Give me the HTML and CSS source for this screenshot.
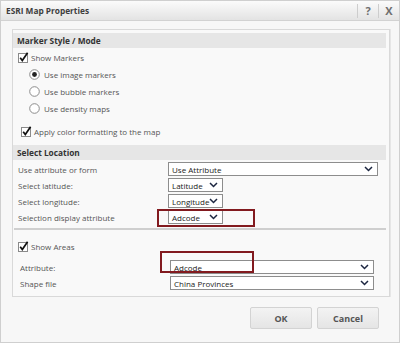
FILE: index.html
```html
<!DOCTYPE html>
<html lang="en">
<head>
  <meta charset="UTF-8">
  <title>ESRI Map Properties</title>
  <link rel="stylesheet" href="styles.css">
</head>
<body>
  <div class="dialog">
    <div class="titlebar">
      <span class="title">ESRI Map Properties</span>
      <div class="tools">
        <span class="tool-sep"></span>
        <span class="tool">?</span>
        <span class="tool-sep"></span>
        <span class="tool">X</span>
      </div>
    </div>

    <div class="panel">
      <div class="section-head">Marker Style / Mode</div>
      <label class="opt">
        <svg class="check" width="11" height="11" viewBox="0 0 11 11"><rect x="0.5" y="1.5" width="9" height="9" fill="#fff" stroke="#8a8a8a"/><path d="M2.2 5.8 L4.3 8.6 L9.6 0.8" fill="none" stroke="#111" stroke-width="1.7"/></svg>
        Show Markers
      </label>
      <label class="opt radio-row">
        <svg class="radio" width="11" height="11" viewBox="0 0 11 11"><circle cx="5.5" cy="5.5" r="4.8" fill="#fff" stroke="#8c8c8c"/><circle cx="5.5" cy="5.5" r="2.4" fill="#222"/></svg>
        Use image markers
      </label>
      <label class="opt radio-row">
        <svg class="radio" width="11" height="11" viewBox="0 0 11 11"><circle cx="5.5" cy="5.5" r="4.8" fill="#fff" stroke="#8c8c8c"/></svg>
        Use bubble markers
      </label>
      <label class="opt radio-row">
        <svg class="radio" width="11" height="11" viewBox="0 0 11 11"><circle cx="5.5" cy="5.5" r="4.8" fill="#fff" stroke="#8c8c8c"/></svg>
        Use density maps
      </label>
      <label class="opt apply-row">
        <svg class="check" width="11" height="11" viewBox="0 0 11 11"><rect x="0.5" y="1.5" width="9" height="9" fill="#fff" stroke="#8a8a8a"/><path d="M2.2 5.8 L4.3 8.6 L9.6 0.8" fill="none" stroke="#111" stroke-width="1.7"/></svg>
        Apply color formatting to the map
      </label>

      <div class="section-head location-head">Select Location</div>
      <div class="field-row">
        <span class="field-label">Use attribute or form</span>
        <div class="select wide">Use Attribute<svg class="chev" width="9" height="6" viewBox="0 0 9 6"><path d="M1 1 L4.5 4.5 L8 1" fill="none" stroke="#1c2640" stroke-width="1.5"/></svg></div>
      </div>
      <div class="field-row">
        <span class="field-label">Select latitude:</span>
        <div class="select small">Latitude<svg class="chev" width="9" height="6" viewBox="0 0 9 6"><path d="M1 1 L4.5 4.5 L8 1" fill="none" stroke="#1c2640" stroke-width="1.5"/></svg></div>
      </div>
      <div class="field-row">
        <span class="field-label">Select longitude:</span>
        <div class="select small">Longitude<svg class="chev" width="9" height="6" viewBox="0 0 9 6"><path d="M1 1 L4.5 4.5 L8 1" fill="none" stroke="#1c2640" stroke-width="1.5"/></svg></div>
      </div>
      <div class="field-row">
        <span class="field-label">Selection display attribute</span>
        <div class="field-cell">
          <div class="select small">Adcode<svg class="chev" width="9" height="6" viewBox="0 0 9 6"><path d="M1 1 L4.5 4.5 L8 1" fill="none" stroke="#1c2640" stroke-width="1.5"/></svg></div>
          <span class="mark mark-one"></span>
        </div>
      </div>

      <div class="divider"></div>

      <label class="opt">
        <svg class="check" width="11" height="11" viewBox="0 0 11 11"><rect x="0.5" y="1.5" width="9" height="9" fill="#fff" stroke="#8a8a8a"/><path d="M2.2 5.8 L4.3 8.6 L9.6 0.8" fill="none" stroke="#111" stroke-width="1.7"/></svg>
        Show Areas
      </label>
      <div class="field-row area-row">
        <span class="field-label">Attribute:</span>
        <div class="field-cell">
          <div class="select area">Adcode<svg class="chev" width="9" height="6" viewBox="0 0 9 6"><path d="M1 1 L4.5 4.5 L8 1" fill="none" stroke="#1c2640" stroke-width="1.5"/></svg></div>
          <span class="mark mark-two"></span>
        </div>
      </div>
      <div class="field-row area-row">
        <span class="field-label">Shape file</span>
        <div class="select area">China Provinces<svg class="chev" width="9" height="6" viewBox="0 0 9 6"><path d="M1 1 L4.5 4.5 L8 1" fill="none" stroke="#1c2640" stroke-width="1.5"/></svg></div>
      </div>
    </div>

    <div class="actions">
      <button class="btn">OK</button>
      <button class="btn">Cancel</button>
    </div>
  </div>
</body>
</html>
```

FILE: styles.css
```css
body {
  margin: 0;
  background-color: #ffffff;
  font-family: "Open Sans", "Noto Sans", sans-serif;
  font-size: 8px;
  color: #555;
}

.dialog {
  width: 400px;
  height: 343px;
  box-sizing: border-box;
  border: 1px solid #cfcfcf;
  background-color: #f7f7f7;
}

.titlebar {
  height: 19px;
  display: flex;
  align-items: center;
  justify-content: space-between;
  padding-left: 5px;
  background: linear-gradient(#fbfbfb, #e3e3e3);
  border-bottom: 1px solid #d2d2d2;
}

.title {
  font-weight: bold;
  font-size: 8.3px;
  color: #3e3e3e;
}

.tools {
  display: flex;
  align-items: center;
  height: 100%;
}

.tool-sep {
  width: 1px;
  height: 14px;
  background-color: #cdcdcd;
}

.tool {
  width: 20px;
  text-align: center;
  font-size: 11px;
  font-weight: bold;
  color: #6e6e6e;
}

.panel {
  margin: 8px 0 0 11px;
  width: 378px;
  box-sizing: border-box;
  border: 1px solid #d9d9d9;
  box-shadow: 1px 0 0 #e6e6e6;
  background-color: #f9f9f9;
  padding: 3px 3px 5px 0;
}

.section-head {
  height: 15px;
  line-height: 15px;
  padding-left: 4px;
  background-color: #e6e6e6;
  font-weight: bold;
  font-size: 8.3px;
  color: #333;
}

.location-head {
  margin-top: 5px;
}

.opt {
  display: flex;
  align-items: center;
  height: 17px;
  padding-left: 5px;
  gap: 2px;
}

.opt:first-of-type {
  margin-top: 1px;
}

.radio-row {
  padding-left: 16px;
  gap: 4px;
}

.apply-row {
  margin-top: 6px;
  padding-left: 8px;
}

.field-row {
  display: flex;
  align-items: center;
  height: 16px;
  padding-left: 5px;
}

.location-head + .field-row {
  margin-top: 1px;
}

.field-label {
  width: 150px;
  flex-shrink: 0;
}

.field-cell {
  position: relative;
  display: flex;
}

.select {
  height: 14px;
  box-sizing: border-box;
  border: 1px solid #8d8d8d;
  background-color: #fff;
  color: #222;
  display: flex;
  align-items: center;
  justify-content: space-between;
  padding: 0 4px 0 3px;
}

.select.wide {
  width: 210px;
}

.select.small {
  width: 55px;
}

.select.area {
  width: 204px;
}

.area-row {
  padding-left: 7px;
}

.chev {
  flex-shrink: 0;
}

.divider {
  margin: 3px 0 0 1px;
  height: 2px;
  background-color: #cfcfcf;
}

.divider + .opt {
  margin-top: 8px;
  margin-bottom: 4px;
}

.mark {
  position: absolute;
  border: 2px solid #821a1f;
  pointer-events: none;
}

.mark-one {
  left: -11px;
  top: -1px;
  width: 94px;
  height: 14px;
}

.mark-two {
  left: -10px;
  top: -9px;
  width: 90px;
  height: 18px;
}

.actions {
  display: flex;
  justify-content: flex-end;
  gap: 5px;
  margin: 10px 20px 0 0;
}

.btn {
  width: 62px;
  height: 22px;
  border: 1px solid #d3d3d3;
  border-radius: 2px;
  background: linear-gradient(#f3f3f3, #e5e5e5);
  font-family: "Open Sans", "Noto Sans", sans-serif;
  font-size: 9px;
  font-weight: bold;
  color: #555;
  cursor: pointer;
}
```
